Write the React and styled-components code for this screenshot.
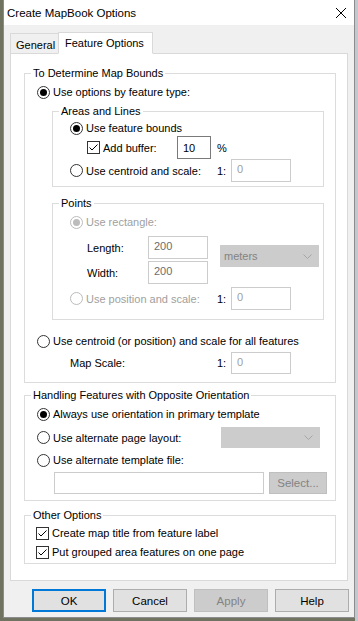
import styled, { createGlobalStyle } from 'styled-components';

const GlobalStyle = createGlobalStyle`
  html, body { margin: 0; padding: 0; }
  body {
    background: #6f735f;
    font-family: "Liberation Sans", Arial, sans-serif;
    font-size: 11px;
    color: #000;
  }
  * { box-sizing: border-box; }
`;

const Desktop = styled.div`
  width: 358px;
  height: 621px;
  overflow: hidden;
  background: linear-gradient(to right, #6f735f 0 355px, #c3c8d0 355px);
`;

const Window = styled.div`
  margin-left: 3px;
  width: 352px;
  height: 618px;
  border: 1px solid #8c8c8c;
  border-top: none;
  background: #f0f0f0;
  display: flex;
  flex-direction: column;
`;

const TitleBar = styled.div`
  height: 25px;
  background: #fff;
  display: flex;
  align-items: center;
  justify-content: space-between;
  padding: 1px 8px 0 3px;
  font-size: 11.5px;
`;

const Body = styled.div`
  padding: 7px 6px 0 6px;
  display: flex;
  flex-direction: column;
`;

const TabStrip = styled.div`
  display: flex;
  align-items: flex-end;
  height: 21px;
`;

const Tab = styled.div`
  height: ${p => (p.$active ? 22 : 20)}px;
  width: ${p => p.$w}px;
  margin-left: ${p => (p.$active ? -1 : 0)}px;
  margin-bottom: ${p => (p.$active ? -1 : 0)}px;
  padding: ${p => (p.$active ? '0 0 1px 6px' : '2px 0 0 5px')};
  border: 1px solid #d9d9d9;
  border-bottom: ${p => (p.$active ? '1px solid #fff' : 'none')};
  background: ${p => (p.$active ? '#fff' : '#f0f0f0')};
  position: relative;
  z-index: ${p => (p.$active ? 1 : 0)};
  display: flex;
  align-items: center;
`;

const Panel = styled.div`
  height: 528px;
  background: #fff;
  border: 1px solid #d9d9d9;
  padding: 11px 11px 0 13px;
`;

const Group = styled.fieldset`
  margin: ${p => p.$mt || 0}px ${p => p.$mr || 0}px 0 ${p => p.$ml || 0}px;
  padding: ${p => p.$pt || 0}px 0 ${p => p.$pb || 0}px 6px;
  border: 1px solid #dcdcdc;
  min-width: 0;
`;

const Legend = styled.legend`
  padding: 0 2px;
  line-height: 16px;
  color: ${p => (p.$disabled ? '#a0a0a0' : '#000')};
`;

const Row = styled.div`
  display: flex;
  align-items: center;
  height: ${p => p.$h || 16}px;
  margin-top: ${p => p.$mt || 0}px;
  margin-left: ${p => p.$ml || 0}px;
`;

const RadioMark = styled.span`
  flex: none;
  width: 13px;
  height: 13px;
  border-radius: 50%;
  border: 1px solid ${p => (p.$disabled ? '#bcbcbc' : '#333')};
  background: #fff;
  display: flex;
  align-items: center;
  justify-content: center;
  &::after {
    content: '';
    width: 7px;
    height: 7px;
    border-radius: 50%;
    background: ${p => (p.$disabled ? '#bcbcbc' : '#000')};
    display: ${p => (p.$checked ? 'block' : 'none')};
  }
`;

const CheckMark = styled.span`
  flex: none;
  width: 13px;
  height: 13px;
  border: 1px solid #333;
  background: #fff;
  display: flex;
`;

const Label = styled.span`
  margin-left: ${p => p.$ml ?? 3}px;
  width: ${p => (p.$w ? `${p.$w}px` : 'auto')};
  flex: none;
  white-space: nowrap;
  color: ${p => (p.$disabled ? '#a0a0a0' : '#000')};
`;

const Field = styled.input`
  flex: none;
  width: ${p => p.$w}px;
  height: ${p => p.$h || 23}px;
  margin-left: ${p => p.$ml || 0}px;
  padding: 0 0 ${p => (p.$top ? 3 : 0)}px 5px;
  border: 1px solid ${p => (p.$active ? '#7a7a7a' : '#cccccc')};
  background: #fff;
  font: inherit;
  color: ${p => p.$tone || '#000'};
  outline: none;
  &:disabled { color: ${p => p.$tone || '#000'}; background: #fff; }
`;

const Combo = styled.div`
  flex: none;
  width: 99px;
  height: ${p => p.$h || 22}px;
  margin-left: ${p => p.$ml || 0}px;
  align-self: ${p => (p.$mt != null ? 'flex-start' : 'auto')};
  margin-top: ${p => p.$mt || 0}px;
  background: #cccccc;
  border: 1px solid #cccccc;
  color: #838383;
  display: flex;
  align-items: center;
  justify-content: space-between;
  padding: 0 6px 0 3px;
`;

const Dimensions = styled.div`
  display: flex;
  margin-top: 6px;
  margin-left: 28px;
`;

const DimColumn = styled.div`
  display: flex;
  flex-direction: column;
  gap: 2px;
`;

const Button = styled.button`
  width: ${p => p.$w || 74}px;
  height: ${p => p.$h || 23}px;
  margin-left: ${p => p.$ml || 0}px;
  font: inherit;
  font-size: 11.5px;
  background: ${p => (p.disabled ? '#cccccc' : '#e1e1e1')};
  border: ${p => (p.$primary ? '2px solid #0078d7' : `1px solid ${p.disabled ? '#bfbfbf' : '#adadad'}`)};
  color: ${p => (p.disabled ? '#838383' : '#000')};
  padding: 0;
`;

const ButtonRow = styled.div`
  display: flex;
  justify-content: flex-end;
  gap: 7px;
  margin: 8px -1px 0 0;
`;

const Radio = ({ checked, disabled, children, w }) => (
  <>
    <RadioMark $checked={checked} $disabled={disabled} />
    <Label $disabled={disabled} $w={w}>{children}</Label>
  </>
);

const Check = ({ children, w }) => (
  <>
    <CheckMark>
      <svg width="11" height="11" viewBox="0 0 11 11">
        <polyline points="1.5,5.5 4,8 9.5,2.5" fill="none" stroke="#000" strokeWidth="1" />
      </svg>
    </CheckMark>
    <Label $w={w}>{children}</Label>
  </>
);

const Chevron = () => (
  <svg width="9" height="5" viewBox="0 0 9 5">
    <polyline points="0.5,0.5 4.5,4.5 8.5,0.5" fill="none" stroke="#a6a6a6" strokeWidth="1" />
  </svg>
);

const App = () => (
  <Desktop>
    <GlobalStyle />
    <Window>
      <TitleBar>
        <span>Create MapBook Options</span>
        <svg width="10" height="10" viewBox="0 0 10 10">
          <path d="M0 0 L10 10 M10 0 L0 10" stroke="#000" strokeWidth="1" />
        </svg>
      </TitleBar>
      <Body>
        <TabStrip>
          <Tab $w={49}>General</Tab>
          <Tab $w={95} $active>Feature Options</Tab>
        </TabStrip>
        <Panel>
          <Group $pt={3} $pb={8}>
            <Legend>To Determine Map Bounds</Legend>
            <Row $ml={6}>
              <Radio checked>Use options by feature type:</Radio>
            </Row>
            <Group $mt={3} $ml={21} $mr={11} $pt={1} $pb={4}>
              <Legend>Areas and Lines</Legend>
              <Row $ml={11}>
                <Radio checked>Use feature bounds</Radio>
              </Row>
              <Row $ml={28} $h={23}>
                <Check w={74}>Add buffer:</Check>
                <Field $w={34} $active defaultValue="10" />
                <Label $ml={6}>%</Label>
              </Row>
              <Row $ml={11} $h={23}>
                <Radio w={131}>Use centroid and scale:</Radio>
                <Label $ml={0} $w={14}>1:</Label>
                <Field $w={60} $top $tone="#a0a0a0" defaultValue="0" disabled />
              </Row>
            </Group>
            <Group $mt={8} $ml={21} $mr={11} $pt={3} $pb={9}>
              <Legend>Points</Legend>
              <Row $ml={11}>
                <Radio checked disabled>Use rectangle:</Radio>
              </Row>
              <Dimensions>
                <DimColumn>
                  <Row $h={23}>
                    <Label $ml={0} $w={61}>Length:</Label>
                    <Field $w={60} $top $tone="#6d6d6d" defaultValue="200" disabled />
                  </Row>
                  <Row $h={23}>
                    <Label $ml={0} $w={61}>Width:</Label>
                    <Field $w={60} $top $tone="#6d6d6d" defaultValue="200" disabled />
                  </Row>
                </DimColumn>
                <Combo $ml={12} $mt={9}>
                  <span>meters</span>
                  <Chevron />
                </Combo>
              </Dimensions>
              <Row $ml={11} $h={23} $mt={3}>
                <Radio disabled w={131}>Use position and scale:</Radio>
                <Label $ml={0} $w={14}>1:</Label>
                <Field $w={60} $top $tone="#a0a0a0" defaultValue="0" disabled />
              </Row>
            </Group>
            <Row $ml={6} $mt={13}>
              <Radio>Use centroid (or position) and scale for all features</Radio>
            </Row>
            <Row $ml={39} $h={22} $mt={3}>
              <Label $ml={0} $w={147}>Map Scale:</Label>
              <Label $ml={0} $w={14}>1:</Label>
              <Field $w={60} $h={22} $top $tone="#a0a0a0" defaultValue="0" disabled />
            </Row>
          </Group>

          <Group $mt={4} $pt={3} $pb={6}>
            <Legend>Handling Features with Opposite Orientation</Legend>
            <Row $ml={6}>
              <Radio checked>Always use orientation in primary template</Radio>
            </Row>
            <Row $ml={6} $h={21} $mt={5}>
              <Radio w={168}>Use alternate page layout:</Radio>
              <Combo $h={21}>
                <span />
                <Chevron />
              </Combo>
            </Row>
            <Row $ml={6} $mt={4}>
              <Radio>Use alternate template file:</Radio>
            </Row>
            <Row $ml={23} $h={22} $mt={4}>
              <Field $w={210} $h={22} defaultValue="" disabled />
              <Button $w={58} $h={22} $ml={5} disabled>Select...</Button>
            </Row>
          </Group>

          <Group $mt={6} $pt={2} $pb={3}>
            <Legend>Other Options</Legend>
            <Row $ml={5}>
              <Check>Create map title from feature label</Check>
            </Row>
            <Row $ml={5} $mt={3}>
              <Check>Put grouped area features on one page</Check>
            </Row>
          </Group>
        </Panel>
        <ButtonRow>
          <Button $primary>OK</Button>
          <Button>Cancel</Button>
          <Button disabled>Apply</Button>
          <Button>Help</Button>
        </ButtonRow>
      </Body>
    </Window>
  </Desktop>
);

export default App;
